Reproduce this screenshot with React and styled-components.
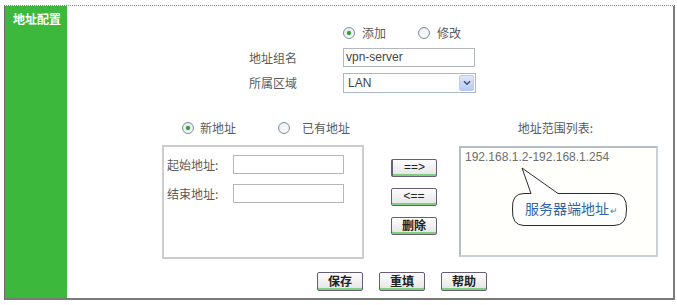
import React from 'react';
import styled, { createGlobalStyle } from 'styled-components';

const GlobalStyle = createGlobalStyle`
	body {
		margin: 0;
		background: #fff;
		font-family: "Noto Sans CJK SC", "Liberation Sans", sans-serif;
		font-size: 12px;
		color: #555;
	}
`;

const Frame = styled('div')`
	box-sizing: border-box;
	display: flex;
	width: 671px;
	height: 295px;
	margin: 5px 0 0 4px;
	border-top: 1px dotted #8a8a8a;
	border-left: 1px solid #6a6a6a;
	border-right: 2px solid #7a7a7a;
	border-bottom: 2px solid #7a7a7a;
`;

const Sidebar = styled('div')`
	width: 62px;
	flex-shrink: 0;
	background: #3cb83c;
	padding: 5px 0 0 8px;
	box-sizing: border-box;
`;

const SidebarTitle = styled('div')`
	color: #fff;
	font-weight: 700;
	font-size: 12px;
	line-height: 16px;
`;

const Content = styled('div')`
	flex: 1;
	display: flex;
	flex-direction: column;
	padding-top: 18px;
`;

const TopForm = styled('div')`
	display: grid;
	grid-template-columns: 94px auto;
	grid-template-rows: 18px 19px 20px;
	row-gap: 6px;
	margin-left: 182px;
	align-items: center;
`;

const Label = styled('span')`
	color: #5a5a5a;
	font-size: 12px;
	line-height: 16px;
	white-space: nowrap;
`;

const RadioRow = styled('div')`
	display: flex;
	align-items: center;
	height: 18px;
	padding-left: ${(p) => p.$indent || 0}px;
	grid-column: ${(p) => p.$column || 'auto'};
`;

const RadioOption = styled('label')`
	display: flex;
	align-items: center;
	gap: ${(p) => p.$gap}px;
	margin-right: ${(p) => p.$after || 0}px;
	color: #5a5a5a;
	font-size: 12px;
	line-height: 16px;
`;

const RadioCircle = styled('span')`
	box-sizing: border-box;
	display: inline-flex;
	align-items: center;
	justify-content: center;
	width: 12px;
	height: 12px;
	border-radius: 50%;
	border: 1px solid #7f8d9c;
	background: radial-gradient(circle at 60% 65%, #f4f6f8 40%, #dde3ea 100%);

	&::after {
		content: '';
		display: ${(p) => (p.$checked ? 'block' : 'none')};
		width: 4px;
		height: 4px;
		border-radius: 50%;
		background: #3aa23a;
		box-shadow: 0 0 1px #2c8a2c;
	}
`;

const TextInput = styled('div')`
	box-sizing: border-box;
	width: ${(p) => p.$width}px;
	height: 19px;
	border: 1px solid #b3b6ba;
	background: #fff;
	padding-left: 2px;
	font-family: "Liberation Sans", Arial, sans-serif;
	font-size: 12px;
	line-height: 17px;
	color: #444;
`;

const Select = styled('div')`
	box-sizing: border-box;
	display: flex;
	align-items: center;
	justify-content: space-between;
	width: 133px;
	height: 20px;
	border: 1px solid #a9b8c9;
	background: #fff;
	padding: 0 1px 0 4px;
	font-family: "Liberation Sans", Arial, sans-serif;
	font-size: 12px;
	color: #444;
`;

const SelectArrow = styled('span')`
	box-sizing: border-box;
	display: flex;
	align-items: center;
	justify-content: center;
	width: 15px;
	height: 16px;
	border: 1px solid #b9cbee;
	border-radius: 2px;
	background: linear-gradient(#dfe8fb, #b7cbf1);
`;

const Middle = styled('div')`
	display: flex;
	margin-top: 26px;
	padding-left: 95px;
`;

const LeftColumn = styled('div')`
	width: 202px;
	display: flex;
	flex-direction: column;
`;

const AddressBox = styled('div')`
	box-sizing: border-box;
	height: 114px;
	margin-top: 8px;
	border: 2px solid #cdcdcd;
	padding: 8px 0 0 3px;
	display: grid;
	grid-template-columns: 66px 111px;
	grid-auto-rows: 19px;
	row-gap: 10px;
	align-items: center;
`;

const ButtonColumn = styled('div')`
	width: 46px;
	margin-left: 27px;
	padding-top: 40px;
	display: flex;
	flex-direction: column;
	gap: ${(p) => p.$gap}px;
`;

const Button = styled('button')`
	box-sizing: border-box;
	width: 46px;
	height: ${(p) => p.$height || 18}px;
	padding: 0 0 2px;
	border: 1px solid #675d74;
	border-left-width: ${(p) => (p.$focus ? 2 : 1)}px;
	border-radius: 2px;
	background: linear-gradient(#fdfdfd, #e4e4e4);
	box-shadow: inset 0 -2px 0 #7ed07e;
	font-family: ${(p) => (p.$plain ? '"Liberation Sans", Arial' : '"Noto Sans CJK SC"')}, sans-serif;
	font-weight: ${(p) => (p.$plain ? 400 : 700)};
	font-size: 12px;
	line-height: 14px;
	color: #222;
	display: flex;
	align-items: center;
	justify-content: center;
`;

const RightColumn = styled('div')`
	width: 199px;
	margin-left: 22px;
	display: flex;
	flex-direction: column;
`;

const ListTitle = styled('div')`
	height: 18px;
	line-height: 18px;
	text-align: center;
	padding-right: 6px;
	color: #5a5a5a;
`;

const ListBox = styled('div')`
	box-sizing: border-box;
	position: relative;
	height: 111px;
	margin-top: 9px;
	border: 2px solid #b5bec7;
	border-right-color: #c9d0d6;
	border-bottom-color: #c9d0d6;
	background: #fffffc;
	padding: 2px 0 0 4px;
`;

const ListItem = styled('div')`
	font-family: "Liberation Sans", Arial, sans-serif;
	font-size: 12px;
	line-height: 15px;
	color: #6e6e6e;
`;

const Callout = styled('div')`
	position: absolute;
	left: 48px;
	top: 18px;
	width: 122px;
	height: 64px;
`;

const CalloutText = styled('span')`
	position: absolute;
	left: 16px;
	top: 32px;
	font-size: 14px;
	line-height: 20px;
	color: #2f64a6;
	white-space: nowrap;
`;

const ReturnMark = styled('span')`
	font-size: 9px;
	color: #777;
	margin-left: 1px;
`;

const BottomBar = styled('div')`
	display: flex;
	gap: 16px;
	margin-top: 13px;
	padding-left: 250px;
`;

const Radio = ({ checked, label, gap, after }) => (
	<RadioOption $gap={gap} $after={after}>
		<RadioCircle $checked={checked} />
		{label}
	</RadioOption>
);

const App = () => {
	return (
		<>
			<GlobalStyle />
			<Frame>
				<Sidebar>
					<SidebarTitle>地址配置</SidebarTitle>
				</Sidebar>
				<Content>
					<TopForm>
						<RadioRow $column="2">
							<Radio checked label="添加" gap={7} after={32} />
							<Radio label="修改" gap={7} />
						</RadioRow>
						<Label>地址组名</Label>
						<TextInput $width={132}>vpn-server</TextInput>
						<Label>所属区域</Label>
						<Select>
							LAN
							<SelectArrow>
								<svg width="8" height="6" viewBox="0 0 8 6">
									<path d="M1 1.2 L4 4.2 L7 1.2" fill="none" stroke="#3d5379" strokeWidth="1.6" />
								</svg>
							</SelectArrow>
						</Select>
					</TopForm>

					<Middle>
						<LeftColumn>
							<RadioRow $indent={20}>
								<Radio checked label="新地址" gap={6} after={42} />
								<Radio label="已有地址" gap={12} />
							</RadioRow>
							<AddressBox>
								<Label>起始地址:</Label>
								<TextInput $width={111} />
								<Label>结束地址:</Label>
								<TextInput $width={111} />
							</AddressBox>
						</LeftColumn>

						<ButtonColumn $gap={11}>
							<Button $plain $focus>==&gt;</Button>
							<Button $plain>&lt;==</Button>
							<Button>删除</Button>
						</ButtonColumn>

						<RightColumn>
							<ListTitle>地址范围列表:</ListTitle>
							<ListBox>
								<ListItem>192.168.1.2-192.168.1.254</ListItem>
								<Callout>
									<svg width="122" height="64" viewBox="0 0 122 64">
										<path
											d="M15 27.5 L22 27.5 L13 2 L49 27.5 L105 27.5 Q118 27.5 117.5 43 Q118 59.5 105 59.5 L15 59.5 Q2.5 59.5 3.5 43 Q2.5 27.5 15 27.5 Z"
											fill="#fff"
											stroke="#2a2a2a"
											strokeWidth="1"
										/>
									</svg>
									<CalloutText>
										服务器端地址<ReturnMark>↵</ReturnMark>
									</CalloutText>
								</Callout>
							</ListBox>
						</RightColumn>
					</Middle>

					<BottomBar>
						<Button $height={19}>保存</Button>
						<Button $height={19}>重填</Button>
						<Button $height={19}>帮助</Button>
					</BottomBar>
				</Content>
			</Frame>
		</>
	);
};

export default App;
